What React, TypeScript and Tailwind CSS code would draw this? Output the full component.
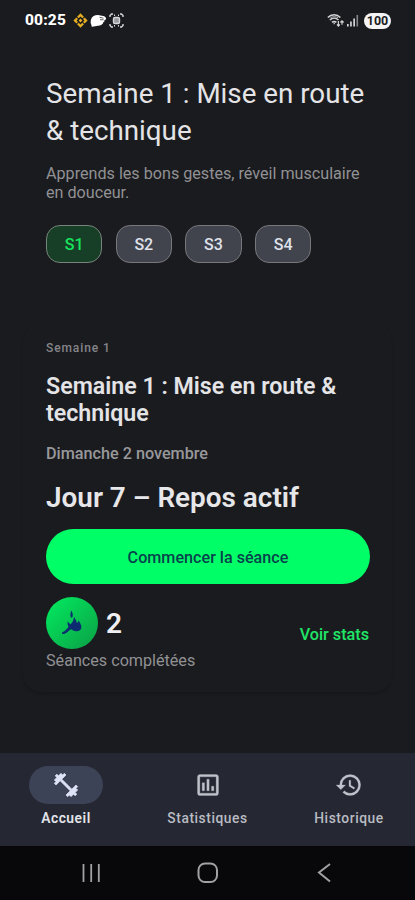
import clsx from "clsx";
import {
  MdFitnessCenter,
  MdHistory,
  MdOutlineInsertChart,
} from "react-icons/md";

const weeks = ["S1", "S2", "S3", "S4"];

const tabs = [
  { label: "Accueil", icon: MdFitnessCenter },
  { label: "Statistiques", icon: MdOutlineInsertChart },
  { label: "Historique", icon: MdHistory },
];

function StatusBar() {
  return (
    <div className="flex h-[41px] shrink-0 items-center justify-between pl-[25px] pr-[24px] text-white">
      <div className="flex items-center">
        <span className="w-[42px] whitespace-nowrap pt-px text-[15.5px] font-extrabold leading-none tracking-[0.15px]">
          00:25
        </span>

        <svg className="ml-[6px]" width="15" height="15" viewBox="0 0 15 15" fill="#e5ad22">
          <path d="M7.5.3L10.9 3.7 9.3 5.3 7.5 3.5 5.7 5.3 4.1 3.7zM3.4 4.5L5 6.1 3.6 7.5 5 8.9 3.4 10.5.4 7.5zM11.6 4.5l3 3-3 3L10 8.9l1.4-1.4L10 6.1zM7.5 5.6l1.9 1.9-1.9 1.9-1.9-1.9zM5.7 9.7l1.8 1.8 1.8-1.8 1.6 1.6-3.4 3.4-3.4-3.4z" />
        </svg>

        <svg className="ml-[2px]" width="17" height="15" viewBox="0 0 17 15" fill="#fff">
          <path d="M1.2 6C2 3.2 5 2 8 2.1l5.2.8c1.3.3 3 1.3 2.9 2.6-.1 1.1-.9 1.5-2 1.5 1 .7.5 2-.8 2.2-.2 2.3-2.6 3.4-5.3 3.5L2.2 13.7c-.8.1-1-.8-.6-1.4C.3 10.5.5 8 1.2 6z" />
          <path d="M9.5 4.3l4 .9M10 6.7l3.6.1" stroke="#1a1b1e" strokeWidth="0.7" />
        </svg>

        <svg className="ml-[2px]" width="15" height="15" viewBox="0 0 15 15" fill="none" stroke="#d7d8da" strokeWidth="1.4">
          <path d="M1 4V2.5L2.5 1H4M11 1h1.5L14 2.5V4M14 11v1.5L12.5 14H11M4 14H2.5L1 12.5V11" />
          <rect x="4.5" y="4.5" width="6" height="6" rx="1.5" fill="#9b9ca0" />
          <path d="M5 2.2h1M9 2.2h1M5 12.8h1M9 12.8h1" />
        </svg>
      </div>

      <div className="flex items-center">
        <svg width="18" height="15" viewBox="0 0 18 15" fill="none" stroke="#d2d3d5" strokeWidth="1.5">
          <path d="M.8 4.5C4.4.8 9.8.8 13.4 4.5M2.8 7c2.5-2.4 6.2-2.4 8.7 0M5 9.4c1.3-1.3 3.1-1.3 4.4 0" />
          <path d="M3.4 4.8c2.3-1.5 5.4-1.5 7.7 0" strokeWidth="0.8" />
          <path d="M7.2 9.5v1.8M11.4 8v5M10 11.5l1.4 1.5 1.4-1.5M15 7.8v4M13.4 9.5L15 7.8l1.6 1.7" strokeWidth="1.2" />
        </svg>

        <svg className="ml-[1px]" width="13" height="13" viewBox="0 0 13 13" fill="#d2d3d5">
          <path d="M1 10h1.7v2.5H1zM4.1 7.5h1.7v5H4.1zM7.3 4.5H9v8H7.3z" />
          <path d="M10.5 1h1.6v11.5h-1.6z" fill="#85868a" />
        </svg>

        <span className="ml-[5px] flex h-[16px] w-[27px] items-center justify-center rounded-full bg-[#f4f4f5] pt-px text-[12.5px] font-bold leading-none text-[#1a1b1e]">
          100
        </span>
      </div>
    </div>
  );
}

function WeekHeader() {
  return (
    <header className="px-[46px] pt-[34px]">
      <h1 className="whitespace-nowrap text-[27.75px] leading-[37px] text-[#e4e4e7]">
        Semaine 1 : Mise en route
        <br />& technique
      </h1>

      <p className="mt-[16px] whitespace-nowrap text-[16.15px] leading-[18.5px] text-[#919194]">
        Apprends les bons gestes, réveil musculaire
        <br />
        en douceur.
      </p>

      <div className="mt-[23px] flex gap-[13.5px]">
        {weeks.map((week, index) => (
          <button
            key={week}
            className={clsx(
              "h-[38px] w-[56.2px] rounded-[14px] border pt-px text-[16px] font-medium",
              index === 0
                ? "border-[#77837c] bg-[#173e26] text-[#18e55f]"
                : "border-[#77787c] bg-[#41434d] text-[#dfe1ea]"
            )}
          >
            {week}
          </button>
        ))}
      </div>
    </header>
  );
}

function SessionCard() {
  return (
    <section className="mx-[23px] mt-[61px] h-[368px] rounded-[18px] bg-[#1a1b1f] pl-[23px] pr-[22px] pt-[16px] shadow-[0_2px_3px_rgba(0,0,0,0.16)]">
      <p className="text-[12px] font-medium leading-[16px] tracking-[0.9px] text-[#858589]">
        Semaine 1
      </p>

      <h2 className="mt-[17px] whitespace-nowrap text-[23.2px] font-semibold leading-[27px] text-[#e4e4e7]">
        Semaine 1 : Mise en route &amp;
        <br />
        technique
      </h2>

      <p className="mt-[17px] text-[16.2px] font-medium leading-[19px] text-[#98989b]">
        Dimanche 2 novembre
      </p>

      <h3 className="mt-[19px] text-[27.9px] font-semibold leading-[32px] text-[#e7e7ea]">
        Jour 7 – Repos actif
      </h3>

      <button className="mt-[15px] h-[55px] w-full rounded-full bg-[#00ff66] pt-[3px] text-[16.15px] font-medium text-[#07434c]">
        Commencer la séance
      </button>

      <div className="mt-[13px] flex items-center justify-between">
        <div>
          <div className="flex items-center gap-[8px]">
            <div className="flex size-[52px] items-center justify-center rounded-full bg-linear-to-br from-[#00ed60] to-[#0a9f45]">
              <svg width="24" height="28" viewBox="0 0 24 28" fill="#0c2b70">
                <path d="M11.3 1.5c1 1.7 2 4.2 1.2 6.2-.4 1-1.3 1.3-1.8.2-.7-1.5-.1-4.3.6-6.4z" />
                <path d="M14 7.8c.5 1.8 2.6 3.5 2.8 6.2.9-.5 1.6-1.4 2-2.8.4 2 2.8 4.4 2.6 7-.1 2.6-2.2 4-4.8 4-2 .1-4-.7-5-2-2.2.4-3.4 2.4-5.5 3.8-1.5 1-3.6 1.3-4.1.4-.4-.8 1-1.2 2.4-2.1 1.7-1.2 3.1-3 4.2-4.5-1-1.8-1.3-3.6-.7-5.6.7 1.6 1.5 2.3 2.7 3 2-1.6 3.1-4 3.4-7.4z" />
              </svg>
            </div>
            <span className="pt-[2px] text-[28px] font-semibold leading-none text-[#f0f0f2]">
              2
            </span>
          </div>
          <p className="mt-px text-[16.15px] leading-[22px] text-[#919194]">
            Séances complétées
          </p>
        </div>

        <a className="pr-px pt-px text-[16.2px] font-medium text-[#20e567]">
          Voir stats
        </a>
      </div>
    </section>
  );
}

function TabBar() {
  return (
    <nav className="mt-auto flex h-[93px] shrink-0 justify-between bg-[#252832] px-[13px] pt-[13px]">
      {tabs.map(({ label, icon: Icon }, index) => (
        <div key={label} className="flex w-[106px] flex-col items-center">
          <div
            className={clsx(
              "flex h-[38px] w-[74px] items-center justify-center rounded-full",
              index === 0 ? "bg-[#3d4357] text-[#dee3f6]" : "text-[#c0c2cb]"
            )}
          >
            {/* the first path of each icon is its empty bounding box */}
            <Icon
              size={28}
              className={clsx(
                "[&>path:first-child]:stroke-none",
                index === 0 ? "stroke-[0.6]" : "stroke-[0.2]"
              )}
            />
          </div>
          <span
            className={clsx(
              "mt-[6px] text-[13.8px] leading-[16px] tracking-[0.55px]",
              index === 0
                ? "font-semibold text-[#e2e3e9]"
                : "font-medium text-[#b9bbc3]"
            )}
          >
            {label}
          </span>
        </div>
      ))}
    </nav>
  );
}

function SystemNav() {
  return (
    <div className="flex h-[54px] shrink-0 items-center justify-between bg-[#08080a] px-[80px] text-[#a1a1a3]">
      <svg width="22" height="22" viewBox="0 0 22 22" stroke="currentColor" strokeWidth="1.8">
        <path d="M3.5 2v18M11.2 2v18M18.8 2v18" />
      </svg>
      <svg width="22" height="22" viewBox="0 0 22 22" fill="none" stroke="currentColor" strokeWidth="2">
        <rect x="1.5" y="1.5" width="18.5" height="18.5" rx="6.5" />
      </svg>
      <svg width="22" height="22" viewBox="0 0 22 22" fill="none" stroke="currentColor" strokeWidth="2">
        <path d="M17 2L6 10.5 17 19.5" />
      </svg>
    </div>
  );
}

export default function App() {
  return (
    <div className="flex h-[900px] w-[415px] flex-col overflow-hidden bg-[#1a1b1e] font-[Roboto,sans-serif]">
      <StatusBar />
      <WeekHeader />
      <SessionCard />
      <TabBar />
      <SystemNav />
    </div>
  );
}
